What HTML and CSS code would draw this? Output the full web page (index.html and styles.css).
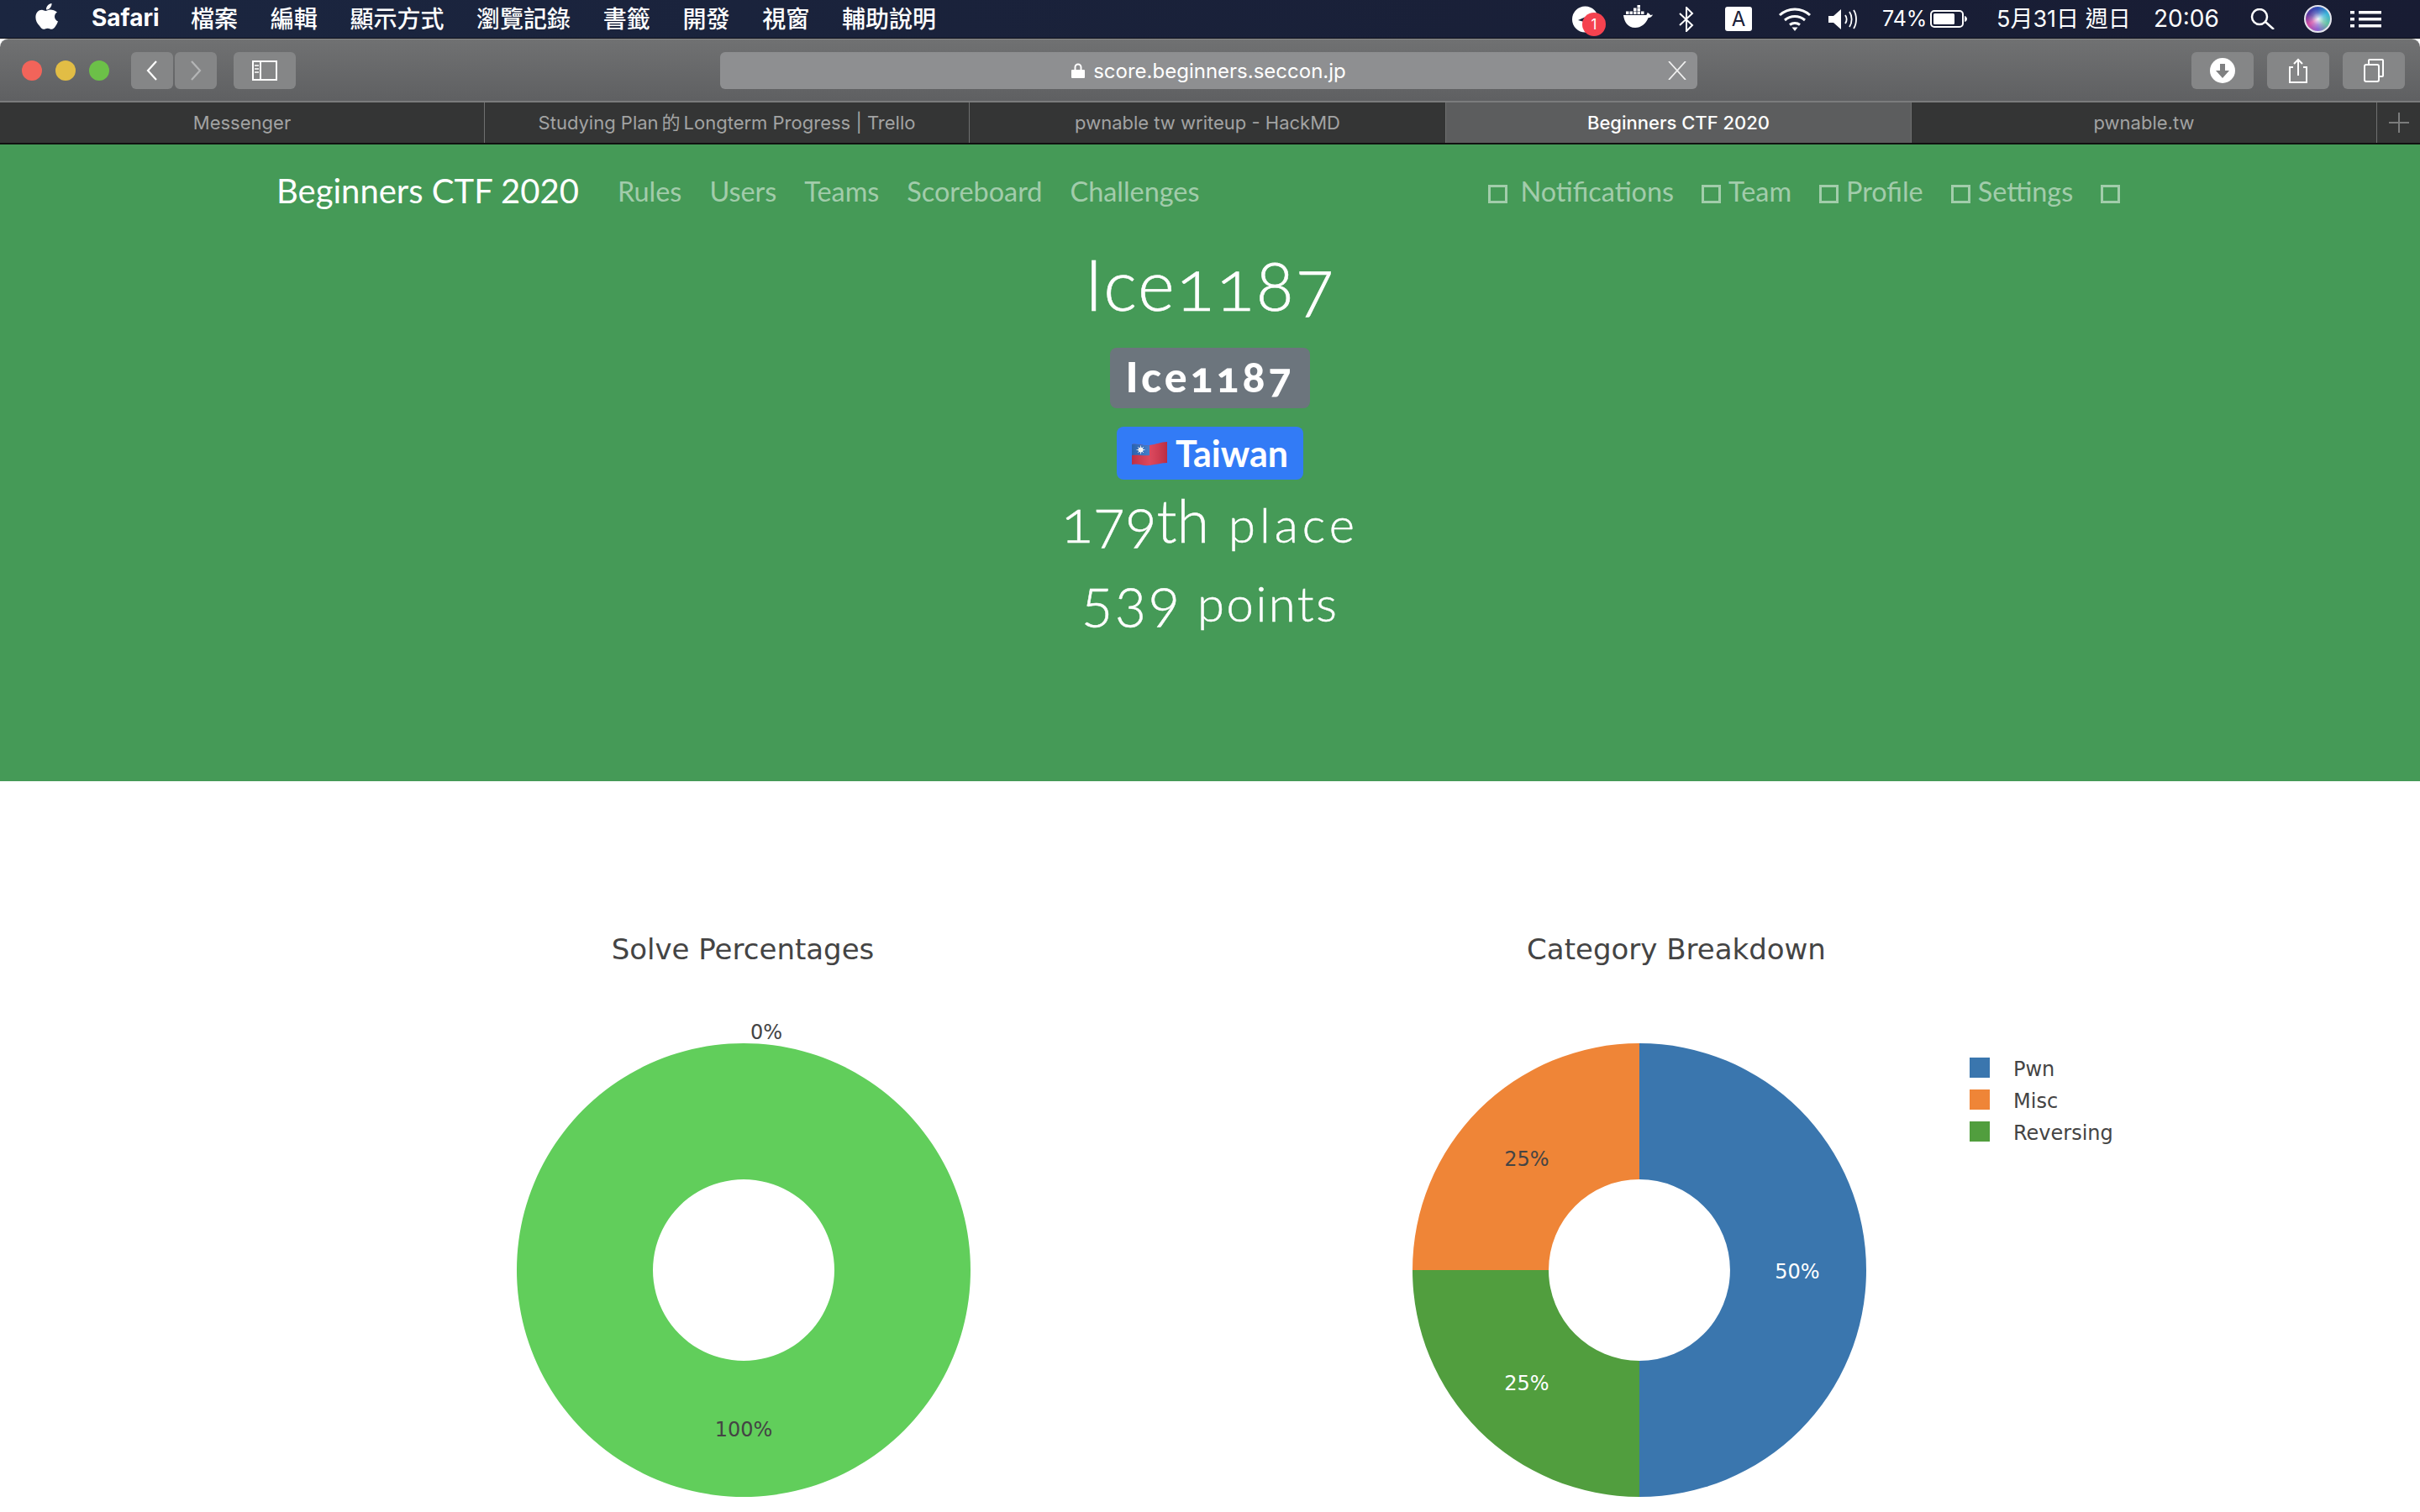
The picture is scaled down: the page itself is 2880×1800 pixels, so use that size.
FILE: index.html
```html
<!DOCTYPE html>
<html lang="zh-Hant">
<head>
    <meta charset="UTF-8">
    <title>Beginners CTF 2020</title>
    <link rel="stylesheet" href="styles.css">
</head>
<body>
    <div class="menubar">
        <div class="menu-left">
            <svg class="apple" viewBox="0 0 27 31"><path d="M19.5 0c.2 2-.5 3.800-1.700 5.200-1.200 1.400-3 2.400-4.800 2.300-.2-1.900.7-3.800 1.800-5C16 1 18 .1 19.500 0zM26 10.600c-2 1.300-3 3-3 5.200 0 2.600 1.400 4.500 4 5.600-.7 2.100-1.700 4-3 5.800-1.400 2-2.700 3.600-4.600 3.600-1.800 0-2.500-1.100-4.700-1.100-2.200 0-3 1.100-4.700 1.100-1.900 0-3.300-1.800-4.800-3.900C1.900 24 .4 20.200.4 16.500c0-5.700 3.700-8.800 7.300-8.800 1.900 0 3.500 1.300 4.700 1.300 1.200 0 3-1.400 5.200-1.400 3 0 6 1 8.400 3z" fill="#fff"/></svg>
            <span class="menu-app">Safari</span>
            <span class="menu-item">檔案</span>
            <span class="menu-item">編輯</span>
            <span class="menu-item">顯示方式</span>
            <span class="menu-item">瀏覽記錄</span>
            <span class="menu-item">書籤</span>
            <span class="menu-item">開發</span>
            <span class="menu-item">視窗</span>
            <span class="menu-item">輔助說明</span>
        </div>
        <div class="menu-right">
            <span class="st-messenger">
                <svg class="messenger" viewBox="0 0 41 36">
                    <circle cx="15.500" cy="16" r="15.500" fill="#fff"/>
                    <path d="M7 17l16-7-9 9z" fill="#1a2038"/>
                    <circle cx="26" cy="22" r="14" fill="#f5424f"/>
                </svg>
                <span class="badge-num">1</span>
            </span>
            <svg class="st-docker" viewBox="0 0 35 27" fill="#fff">
                <path d="M0 12h27c1-.2 1.500-2 1.500-3 1.500.8 3 1.500 3.500 3l3-.5c-1 2.500-3 3.500-5.500 3.700C27 22 21 27 14 27 5 27 1 20 0 12z"/>
                <rect x="3" y="7.500" width="3.500" height="3.500"/><rect x="7.500" y="7.500" width="3.500" height="3.500"/><rect x="12" y="7.500" width="3.500" height="3.500"/><rect x="16.500" y="7.500" width="3.500" height="3.500"/><rect x="21" y="7.500" width="3.500" height="3.500"/>
                <rect x="12" y="3.500" width="3.500" height="3.500"/><rect x="16.500" y="3.500" width="3.500" height="3.500"/>
                <rect x="16.500" y="0" width="3.500" height="3"/>
            </svg>
            <svg class="st-bluetooth" viewBox="0 0 18 30"><path d="M1 8l15 14-7 7V1l7 7L1 22" fill="none" stroke="#fff" stroke-width="2"/></svg>
            <span class="st-abox">A</span>
            <svg class="st-wifi" viewBox="0 0 40 28" fill="none" stroke="#fff" stroke-width="3">
                <path d="M2 9c10-9.500 26-9.500 36 0"/><path d="M8 15c7-6 17-6 24 0"/><path d="M14 20.500c3.500-2.800 8.500-2.800 12 0"/>
                <path d="M16.500 23.500h7L20 28z" fill="#fff" stroke="none"/>
            </svg>
            <svg class="st-speaker" viewBox="0 0 35 24">
                <path d="M0 8h6l9-8v24l-9-8H0z" fill="#fff"/>
                <path d="M20 7c2 3 2 7 0 10M25 3c3.500 5 3.500 13 0 18M30 1c4 6 4 16 0 22" fill="none" stroke="#fff" stroke-width="1.800"/>
            </svg>
            <span class="st-percent">74%</span>
            <svg class="st-battery" viewBox="0 0 44 21">
                <rect x="1" y="1" width="38" height="19" rx="4" fill="none" stroke="#fff" stroke-width="2"/>
                <rect x="4" y="4" width="25" height="13" rx="1.500" fill="#fff"/>
                <path d="M41 7c2 .5 3 2 3 3.500S43 13.500 41 14z" fill="#fff"/>
            </svg>
            <span class="st-date">5月31日 週日</span>
            <span class="st-time">20:06</span>
            <svg class="st-search" viewBox="0 0 30 25" fill="none" stroke="#fff" stroke-width="2.500"><circle cx="11" cy="10" r="9"/><path d="M18 16l10 9"/></svg>
            <span class="st-siri"></span>
            <svg class="st-list" viewBox="0 0 37 20" fill="#fff">
                <rect x="0" y="0" width="5" height="3.500"/><rect x="10" y="0" width="27" height="3.500"/>
                <rect x="0" y="8" width="5" height="3.500"/><rect x="10" y="8" width="27" height="3.500"/>
                <rect x="0" y="16" width="5" height="3.500"/><rect x="10" y="16" width="27" height="3.500"/>
            </svg>
        </div>
    </div>

    <div class="toolbar">
        <div class="lights">
            <span class="light light-red"></span>
            <span class="light light-yellow"></span>
            <span class="light light-green"></span>
        </div>
        <div class="tool-btn btn-back">
            <svg class="btn-icon" viewBox="0 0 14 24"><path d="M12 1L2 12l10 11" fill="none" stroke="#fff" stroke-width="2.200"/></svg>
        </div>
        <div class="tool-btn btn-forward">
            <svg class="btn-icon" viewBox="0 0 14 24"><path d="M2 1l10 11L2 23" fill="none" stroke="#b4b5b6" stroke-width="2.200"/></svg>
        </div>
        <div class="tool-btn btn-sidebar">
            <svg class="sidebar-icon" viewBox="0 0 30 24" fill="none" stroke="#fff" stroke-width="2">
                <rect x="1" y="1" width="28" height="22"/><path d="M10 1v22" />
                <path d="M3 6h5M3 10h5M3 14h5" stroke-width="1.500"/>
            </svg>
        </div>
        <div class="urlbar">
            <svg class="lock" viewBox="0 0 16 18"><path d="M3.500 8V5a4.500 4.500 0 019 0v3h-2V5a2.500 2.500 0 00-5 0v3z" fill="#fff"/><rect x="0" y="8" width="16" height="10" rx="1" fill="#fff"/></svg>
            <span class="url-text">score.beginners.seccon.jp</span>
            <svg class="url-close" viewBox="0 0 22 22"><path d="M1 0l20 22M21 0L1 22" stroke="#f0f0f0" stroke-width="1.800"/></svg>
        </div>
        <div class="tool-btn btn-right btn-download">
            <svg class="right-icon" viewBox="0 0 30 30"><circle cx="15" cy="15" r="15" fill="#fff"/><path d="M12 7h6v8h5l-8 9-8-9h5z" fill="#7f8081"/></svg>
        </div>
        <div class="tool-btn btn-right btn-share">
            <svg class="right-icon" viewBox="0 0 30 30" fill="none" stroke="#fff" stroke-width="2"><path d="M9 11H5v18h20V11h-4"/><path d="M15 21V2M10 7l5-5 5 5"/></svg>
        </div>
        <div class="tool-btn btn-right btn-tabs">
            <svg class="right-icon" viewBox="0 0 30 30" fill="none" stroke="#fff" stroke-width="2"><rect x="4" y="8" width="17" height="20" rx="2"/><path d="M9 8V3a1 1 0 011-1h15a1 1 0 011 1v18a1 1 0 01-1 1h-4"/></svg>
        </div>
    </div>

    <div class="tabs">
        <div class="tab">Messenger</div>
        <div class="tab">Studying Plan&thinsp;的&thinsp;Longterm Progress | Trello</div>
        <div class="tab">pwnable tw writeup - HackMD</div>
        <div class="tab tab-active">Beginners CTF 2020</div>
        <div class="tab">pwnable.tw</div>
        <div class="tab tab-add">
            <svg class="plus" viewBox="0 0 24 24"><path d="M12 0v24M0 12h24" stroke="#7b7c7c" stroke-width="2"/></svg>
        </div>
    </div>

    <div class="hero">
        <nav class="navbar">
            <a class="brand">Beginners CTF 2020</a>
            <a class="nav-link">Rules</a>
            <a class="nav-link">Users</a>
            <a class="nav-link">Teams</a>
            <a class="nav-link">Scoreboard</a>
            <a class="nav-link">Challenges</a>
            <div class="nav-right">
                <a class="nav-link"><i class="box box-wide"></i>Notifications</a>
                <a class="nav-link"><i class="box"></i>Team</a>
                <a class="nav-link"><i class="box"></i>Profile</a>
                <a class="nav-link"><i class="box"></i>Settings</a>
                <a class="nav-link"><i class="box box-last"></i></a>
            </div>
        </nav>
        <h1 class="user-name">Ice1187</h1>
        <div class="hero-row"><span class="badge badge-gray">Ice1187</span></div>
        <div class="hero-row"><span class="badge badge-blue">
            <svg class="flag" viewBox="0 0 42 30">
                <defs>
                    <linearGradient id="flagShade" x1="0" y1="0" x2="1" y2="0">
                        <stop offset="0" stop-color="#000" stop-opacity=".12"/><stop offset=".5" stop-color="#fff" stop-opacity=".1"/><stop offset="1" stop-color="#000" stop-opacity=".14"/>
                    </linearGradient>
                </defs>
                <path d="M0 4c8-1 14 2 21 1 8-1 14-4 21-4v25c-7 0-13 2-21 3S7 26 0 28z" fill="#d8344c"/>
                <path d="M0 4c8-1 14 2 21 1v12c-8 1-14-1-21 0z" fill="#2f6fc4"/>
                <circle cx="10.500" cy="10.500" r="3" fill="#fff"/>
                <path d="M10.500 5.500v10M5.500 10.500h10M7 7l7 7M14 7l-7 7" stroke="#fff" stroke-width=".8"/>
                <path d="M0 4c8-1 14 2 21 1 8-1 14-4 21-4v25c-7 0-13 2-21 3S7 26 0 28z" fill="url(#flagShade)"/>
            </svg>Taiwan</span></div>
        <h2 class="stat stat-place"><span class="stat-num">179th</span> <small>place</small></h2>
        <h2 class="stat stat-points"><span class="stat-num">539</span> <small>points</small></h2>
    </div>

    <div class="charts">
        <svg class="chart" viewBox="0 0 1080 735">
            <text class="chart-title" x="524" y="92" text-anchor="middle">Solve Percentages</text>
            <path d="M525 192a270 270 0 1 1-.01 0zM525 354a108 108 0 1 0 .01 0z" fill="#61ce5b" fill-rule="evenodd"/>
            <text class="chart-label" x="552" y="187" text-anchor="middle">0%</text>
            <text class="chart-label" x="525" y="660" text-anchor="middle">100%</text>
        </svg>
        <svg class="chart" viewBox="0 0 1080 735">
            <text class="chart-title" x="555" y="92" text-anchor="middle">Category Breakdown</text>
            <path d="M511 192a270 270 0 0 1 0 540V570a108 108 0 0 0 0-216z" fill="#3a76ae"/>
            <path d="M511 732a270 270 0 0 1-270-270h162a108 108 0 0 0 108 108z" fill="#519e3e"/>
            <path d="M241 462a270 270 0 0 1 270-270v162a108 108 0 0 0-108 108z" fill="#ef8537"/>
            <text class="chart-label" x="377" y="338" text-anchor="middle">25%</text>
            <text class="chart-label label-white" x="699" y="472" text-anchor="middle">50%</text>
            <text class="chart-label label-white" x="377" y="605" text-anchor="middle">25%</text>
            <rect x="904" y="209" width="24" height="24" fill="#3a76ae"/>
            <rect x="904" y="247" width="24" height="24" fill="#ef8537"/>
            <rect x="904" y="285" width="24" height="24" fill="#519e3e"/>
            <text class="chart-label" x="956" y="231">Pwn</text>
            <text class="chart-label" x="956" y="269">Misc</text>
            <text class="chart-label" x="956" y="307">Reversing</text>
        </svg>
    </div>
</body>
</html>
```

FILE: styles.css
```css
html, body {
    margin: 0;
    height: 1800px;
    overflow: hidden;
    background: #fff;
}
body {
    font-family: Inter, "Noto Sans CJK TC", sans-serif;
}

/* menu bar */
.menubar {
    display: flex;
    justify-content: space-between;
    height: 46px;
    padding: 0 46px 0 42px;
    box-sizing: border-box;
    border-bottom: 1px solid #0d0f18;
    background: linear-gradient(90deg, #1b2640, #181c33);
    color: #fff;
    font-size: 27px;
    line-height: 45px;
}
.menu-left, .menu-right {
    display: flex;
    align-items: center;
}
.apple {
    width: 27px;
    height: 31px;
    margin-bottom: 6px;
    margin-right: 40px;
}
.menu-app {
    font-size: 28px;
    font-weight: 700;
    margin-right: 38px;
    margin-bottom: 2px;
    width: 80px;
}
.menu-item {
    font-family: "Noto Sans CJK TC", sans-serif;
    font-size: 28px;
    font-weight: 500;
    margin-right: 38.700px;
    margin-bottom: 2px;
}
.st-messenger {
    position: relative;
    width: 41px;
    height: 36px;
    margin-top: 4px;
}
.messenger {
    display: block;
    width: 41px;
    height: 36px;
}
.badge-num {
    position: absolute;
    left: 20px;
    top: 10px;
    width: 12px;
    font-size: 17px;
    line-height: 24px;
    text-align: center;
}
.st-docker { width: 35px; height: 27px; margin-left: 20px; margin-bottom: 6px; }
.st-bluetooth { width: 18px; height: 30px; margin-left: 31px; }
.st-abox {
    width: 32px;
    height: 29px;
    margin-left: 37px;
    border-radius: 3px;
    background: #fff;
    color: #1a2038;
    font-size: 24px;
    line-height: 29px;
    text-align: center;
}
.st-wifi { width: 40px; height: 28px; margin-left: 31px; }
.st-speaker { width: 35px; height: 24px; margin-left: 20px; }
.st-percent { margin-left: 29px; font-size: 25px; width: 48px; white-space: nowrap; }
.st-battery { width: 44px; height: 21px; margin-left: 9px; }
.st-date { margin-left: 35px; width: 168px; font-size: 27px; white-space: nowrap; }
.st-time { margin-left: 19px; width: 76px; font-size: 28px; }
.st-search { width: 30px; height: 25px; margin-left: 39px; }
.st-siri {
    width: 29px;
    height: 29px;
    margin-left: 34px;
    border: 2px solid #e4e4ec;
    border-radius: 50%;
    background:
        radial-gradient(circle, rgba(255, 255, 255, .9) 0, rgba(255, 255, 255, .25) 35%, transparent 60%),
        conic-gradient(#2f4fb8, #38b2d8, #66c0a0, #8a64cf, #d24fa6, #55399f, #2f4fb8);
}
.st-list { width: 37px; height: 20px; margin-left: 22px; }

/* safari toolbar */
.toolbar {
    display: flex;
    align-items: center;
    height: 76px;
    padding-top: 1px;
    box-sizing: border-box;
    border-top: 1px solid #8a8b8c;
    border-bottom: 2px solid #7b7c7d;
    border-radius: 10px 10px 0 0;
    background: linear-gradient(#707172, #5f6062);
}
.lights {
    display: flex;
    gap: 16px;
    margin-left: 26px;
    margin-right: 26px;
}
.light {
    width: 24px;
    height: 24px;
    border-radius: 50%;
}
.light-red { background: #f2645a; }
.light-yellow { background: #e2bd45; }
.light-green { background: #6cc048; }
.tool-btn {
    display: flex;
    align-items: center;
    justify-content: center;
    height: 44px;
    border-radius: 6px;
    background: #858687;
}
.btn-back, .btn-forward { width: 50px; }
.btn-forward { margin-left: 2px; }
.btn-icon { width: 14px; height: 24px; }
.btn-sidebar { width: 74px; margin-left: 20px; }
.sidebar-icon { width: 30px; height: 24px; }
.urlbar {
    display: flex;
    align-items: center;
    justify-content: center;
    position: relative;
    width: 1163px;
    height: 44px;
    margin-left: 505px;
    border-radius: 6px;
    background: #8e8f91;
    color: #fff;
    font-size: 24px;
}
.lock { width: 16px; height: 18px; margin-right: 10px; }
.url-close {
    position: absolute;
    right: 13px;
    top: 11px;
    width: 22px;
    height: 22px;
}
.btn-right { width: 74px; margin-left: 16px; }
.btn-download { margin-left: 588px; }
.right-icon { width: 30px; height: 30px; }

/* tabs */
.tabs {
    display: grid;
    grid-template-columns: 577px 577px 567px 554px 554px 51px;
    height: 50px;
    box-sizing: border-box;
    border-bottom: 2px solid #111;
    background: #343535;
    color: #a2a3a3;
    font-size: 22px;
}
.tab {
    line-height: 48px;
    text-align: center;
    border-right: 1px solid #6f7070;
    white-space: nowrap;
}
.tab-active {
    background: #5c5d5e;
    color: #fff;
    font-weight: 500;
}
.tab-add {
    display: flex;
    align-items: center;
    justify-content: center;
    border-right: 0;
}
.plus { width: 24px; height: 24px; }

/* scoreboard page */
.hero {
    height: 758px;
    background: #459a57;
    color: #fff;
    text-align: center;
}
.navbar {
    display: flex;
    align-items: center;
    height: 110px;
    padding: 0 0 0 329px;
    font-family: Lato, sans-serif;
    font-size: 32.400px;
    text-align: left;
}
.brand {
    font-size: 40px;
    margin-right: 46px;
}
.nav-link {
    color: rgba(255, 255, 255, .5);
    margin-right: 33px;
}
.nav-right {
    display: flex;
    align-items: center;
    margin-left: 310px;
}
.box {
    display: inline-block;
    width: 23px;
    height: 22px;
    margin-right: 9px;
    box-sizing: border-box;
    border: 3px solid rgba(255, 255, 255, .5);
    vertical-align: -2px;
}
.box-wide { margin-right: 16px; }
.box-last { margin-right: 0; }
.user-name {
    margin: 0;
    height: 112px;
    font-family: Lato, sans-serif;
    font-size: 84px;
    font-weight: 300;
    font-variant-numeric: oldstyle-nums;
    -webkit-text-stroke: .6px #fff;
    letter-spacing: 2px;
    line-height: 112px;
}
.hero-row {
    display: flex;
    justify-content: center;
}
.badge {
    display: flex;
    align-items: center;
    justify-content: center;
    border-radius: 8px;
    color: #fff;
    font-family: Lato, sans-serif;
    font-weight: 700;
}
.badge-gray {
    width: 238px;
    height: 72px;
    box-sizing: border-box;
    padding-bottom: 4px;
    margin-top: 20px;
    background: #6c757d;
    font-size: 50px;
    font-weight: 900;
    font-variant-numeric: oldstyle-nums;
    letter-spacing: 4px;
}
.badge-blue {
    width: 222px;
    height: 63px;
    margin-top: 22px;
    background: #327bf6;
    font-size: 43px;
}
.flag { width: 42px; height: 30px; margin-right: 10px; }
.stat {
    margin: 0;
    font-family: Lato, sans-serif;
    font-weight: 300;
    font-variant-numeric: oldstyle-nums;
    -webkit-text-stroke: .5px #fff;
    font-size: 70px;
    line-height: 84px;
}
.stat small {
    font-size: 58px;
}
.stat-place { margin-top: 6px; }
.stat-place small { margin-left: 4px; letter-spacing: 5px; }
.stat-points { margin-top: 5px; }
.stat-points small { letter-spacing: 2.500px; }
.stat-points .stat-num { letter-spacing: 2px; }

/* plotly charts */
.charts {
    display: flex;
    padding: 120px 0 0 360px;
}
.chart {
    width: 1080px;
    height: 735px;
    flex: none;
}
.chart text {
    font-family: "DejaVu Sans", Verdana, sans-serif;
    fill: #444;
}
.chart-title { font-size: 34px; }
.chart-label { font-size: 24px; }
.chart .label-white { fill: #fff; }
```
